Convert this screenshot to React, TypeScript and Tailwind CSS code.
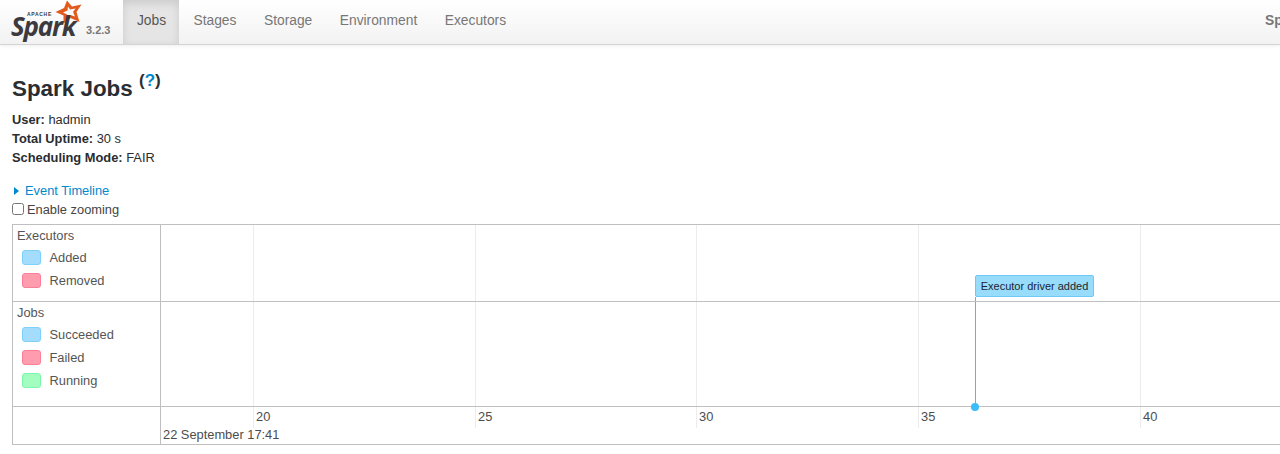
const navItems = ['Stages', 'Storage', 'Environment', 'Executors']
const gridLines = [
  { x: 92, label: '20' },
  { x: 314, label: '25' },
  { x: 535, label: '30' },
  { x: 757, label: '35' },
  { x: 979, label: '40' },
]

function SparkLogo() {
  return (
    <div className="relative h-[44px] w-[74px] shrink-0">
      <svg className="absolute left-[54px] top-0" width="29" height="25" viewBox="0 0 29 25">
        <path
          d="M13 0.5 L18 6.5 L27.5 4.5 L22.5 12 L25.5 22 L16.5 18 L9.5 23.5 L9.5 15.5 L1.5 12 L10 8 Z M14 6.5 L13.5 10.5 L9 12.5 L13 14.5 L13 17.5 L16.5 15 L21 16.5 L19 12 L21.5 8.5 L16 9.5 Z"
          fill="#e25a1c"
          fillRule="evenodd"
        />
      </svg>
      <span className="absolute left-[27px] top-[12px] text-[5px] font-bold leading-[5px] tracking-[0.7px] text-[#3c3a3e]">
        APACHE
      </span>
      <span className="absolute left-[11px] top-[17px] font-['Open_Sans',sans-serif] text-[26px] font-bold italic leading-[18px] tracking-[-1.2px] text-[#3c3a3e]">
        Spark
      </span>
    </div>
  )
}

function Legend({ color, label }: { color: string; label: string }) {
  return (
    <div className="flex h-[23px] items-center pl-[9px]">
      <span className={`h-[15px] w-[19px] rounded-[3px] border ${color}`}></span>
      <span className="ml-[8.5px] text-[#555]">{label}</span>
    </div>
  )
}

export default function App() {
  return (
    <div className="h-[454px] w-[1280px] overflow-hidden bg-white font-['Liberation_Sans',Arial,sans-serif] text-[12.85px] text-[#2a2d31]">
      {/* Navbar */}
      <nav className="flex h-[45px] items-stretch border-b border-[#d4d4d4] bg-gradient-to-b from-white to-[#f2f2f2] shadow-[0_1px_4px_rgba(0,0,0,0.07)]">
        <SparkLogo />
        <span className="ml-[12px] mt-[23px] text-[11px] font-bold leading-[14px] text-[#777]">3.2.3</span>
        <a className="ml-[13px] flex w-[56px] items-center justify-center bg-[#e5e5e5] pb-[2px] text-[13.8px] text-[#555] shadow-[inset_0_3px_8px_rgba(0,0,0,0.12)]">
          Jobs
        </a>
        <div className="ml-[14px] flex items-center gap-[27.5px] pb-[2px] text-[13.8px] text-[#777]">
          {navItems.map((item) => (
            <a key={item}>{item}</a>
          ))}
        </div>
        <div className="ml-auto flex items-center whitespace-nowrap pb-[2px] pl-[10px] text-[13.8px] font-bold text-[#777]">
          <span className="w-[15px] overflow-hidden">Sp</span>
        </div>
      </nav>

      {/* Content */}
      <div className="pl-[12px]">
        <h3 className="mt-[28px] h-[32px] text-[22.4px] font-bold leading-[32px]">
          Spark Jobs{' '}
          <sup className="relative top-[-10px] text-[17px] leading-none">
            (<a className="text-[#0088cc]">?</a>)
          </sup>
        </h3>
        <ul className="mt-[5px] leading-[19px]">
          <li>
            <strong>User:</strong> hadmin
          </li>
          <li>
            <strong>Total Uptime:</strong> 30 s
          </li>
          <li>
            <strong>Scheduling Mode:</strong> FAIR
          </li>
        </ul>
        <div className="mt-[14px] flex h-[19px] items-center text-[#0088cc]">
          <span className="ml-[2px] h-0 w-0 border-y-[4.5px] border-l-[5px] border-y-transparent border-l-[#0088cc]"></span>
          <span className="ml-[6px]">Event Timeline</span>
        </div>
        <label className="flex h-[19px] items-center">
          <input type="checkbox" className="mb-[2px] h-[12px] w-[12px] appearance-auto" />
          <span className="ml-[3px] text-[#444]">Enable zooming</span>
        </label>

        {/* Timeline */}
        <div className="mt-[5px] w-[1400px] border border-[#bfbfbf] leading-[15px]">
          <div className="flex h-[77px] border-b border-[#bfbfbf]">
            <div className="w-[148px] shrink-0 border-r border-[#bfbfbf] pt-[3px] text-[#555]">
              <div className="h-[18px] pl-[4px] leading-[16px]">Executors</div>
              <Legend color="border-[#7cd0fb] bg-[#a3dcfd]" label="Added" />
              <Legend color="border-[#fc7f97] bg-[#ff9cae]" label="Removed" />
            </div>
            <div className="relative flex-1">
              {gridLines.map((g) => (
                <div key={g.x} className="absolute top-0 h-full border-l border-[#ececec]" style={{ left: g.x }}></div>
              ))}
              <div className="absolute left-[814px] top-[50px] flex h-[22px] w-[119px] items-center justify-center whitespace-nowrap rounded-[2px] border border-[#6fc9f8] bg-[#98dcfb] text-[11px] text-[#1a2530]">
                Executor driver added
              </div>
              <div className="absolute left-[814px] top-[72px] h-[4px] border-l border-[#4cb9ef]"></div>
            </div>
          </div>
          <div className="flex h-[105px] border-b border-[#bfbfbf]">
            <div className="w-[148px] shrink-0 border-r border-[#bfbfbf] pt-[3px] text-[#555]">
              <div className="h-[18px] pl-[4px] leading-[16px]">Jobs</div>
              <Legend color="border-[#7cd0fb] bg-[#a3dcfd]" label="Succeeded" />
              <Legend color="border-[#fc7f97] bg-[#ff9cae]" label="Failed" />
              <Legend color="border-[#7bf7a9] bg-[#a3fcc0]" label="Running" />
            </div>
            <div className="relative flex-1">
              {gridLines.map((g) => (
                <div key={g.x} className="absolute top-0 h-full border-l border-[#ececec]" style={{ left: g.x }}></div>
              ))}
              <div className="absolute left-[814px] top-0 h-full border-l border-[#4cb9ef]"></div>
              <div className="absolute left-[810px] top-[101px] z-10 h-[8px] w-[8px] rounded-full bg-[#3bbcfb]"></div>
            </div>
          </div>
          <div className="flex h-[37px]">
            <div className="w-[148px] shrink-0 border-r border-[#bfbfbf]"></div>
            <div className="relative flex-1 text-[#4d4d4d]">
              {gridLines.map((g) => (
                <div
                  key={g.x}
                  className="absolute top-0 h-[21px] border-l border-[#ececec] pl-[2px] pt-[2px]"
                  style={{ left: g.x }}
                >
                  {g.label}
                </div>
              ))}
              <div className="absolute bottom-[2px] left-[2px] whitespace-nowrap">22 September 17:41</div>
            </div>
          </div>
        </div>
      </div>
    </div>
  )
}
